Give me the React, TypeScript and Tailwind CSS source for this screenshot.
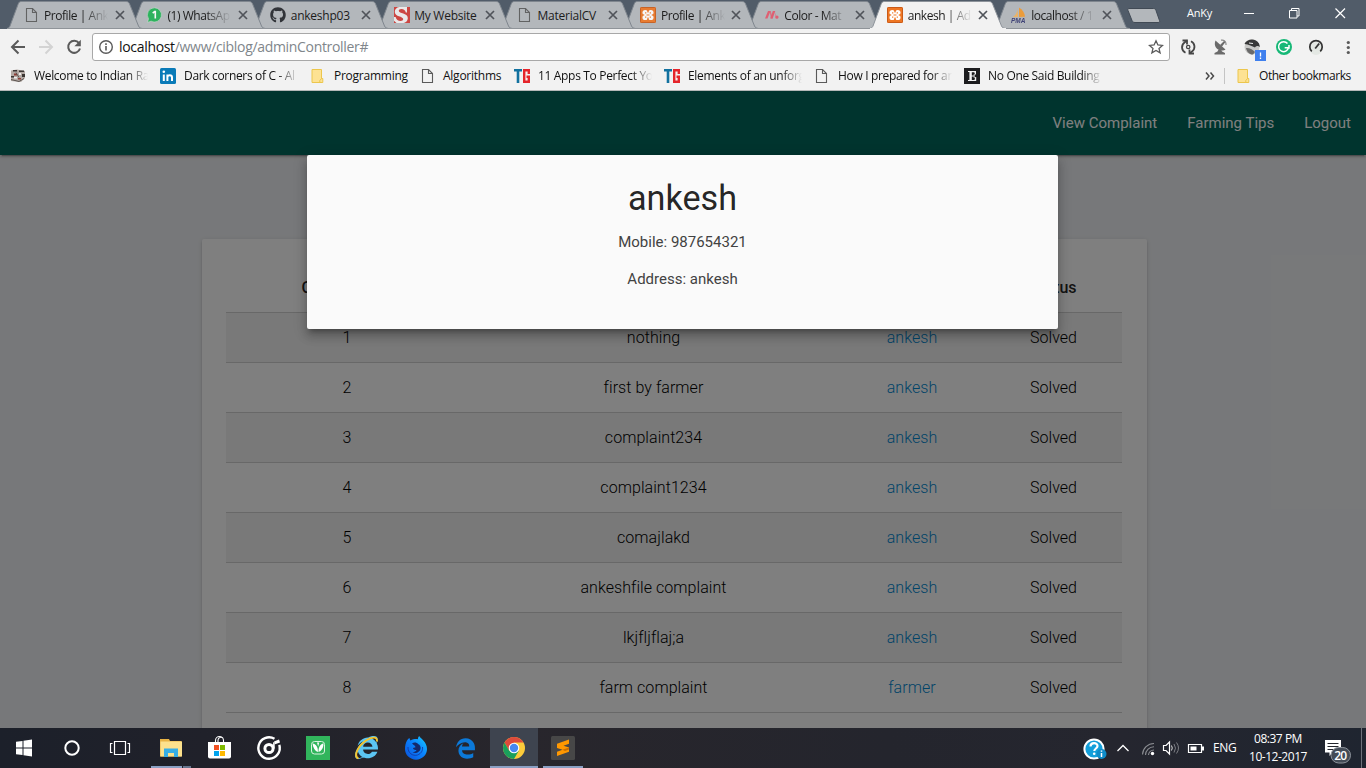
import React from "react";
import { FaGithub, FaEdgeLegacy, FaInternetExplorer } from "react-icons/fa";

type IconName = "file" | "whatsapp" | "github" | "s" | "xampp" | "material" | "pma";

const FileIcon = () => (
  <svg className="block" width="16" height="16" viewBox="0 0 16 16" fill="none" stroke="#5a5a5a" strokeWidth="1.1">
    <path d="M2.500 1.500h6l4 4v9h-10z" />
    <path d="M8.500 1.500v4h4" />
  </svg>
);

const XamppIcon = () => (
  <svg className="block" width="16" height="16" viewBox="0 0 16 16">
    <rect width="16" height="16" rx="1.5" fill="#ee7623" />
    <rect x=".5" y=".5" width="15" height="15" rx="1" fill="none" stroke="#c95a18" />
    <g fill="#fff">
      <circle cx="5.200" cy="5.600" r="2.700" />
      <circle cx="10.800" cy="5.600" r="2.700" />
      <circle cx="5.200" cy="10.400" r="2.700" />
      <circle cx="10.800" cy="10.400" r="2.700" />
      <path d="M4.500 5h7v6h-7z" />
    </g>
    <path d="M5.700 5.200v1.300M10.300 5.200v1.300M5.700 9.500v1.300M10.300 9.500v1.300M8 3v2.500M8 10.500V13M2.300 8h2M11.700 8h2M6.500 8h3" stroke="#ee7623" strokeWidth="1.200" />
  </svg>
);

const TabIcon = ({ name }: { name: IconName }) => {
  if (name === "file") return <FileIcon />;
  if (name === "xampp") return <XamppIcon />;
  if (name === "github") return <FaGithub size={16} color="#24262b" />;
  if (name === "whatsapp")
    return (
      <svg className="block" width="16" height="16" viewBox="0 0 16 16">
        <path d="M7.500.8a7.100 7.100 0 1 1-3.400 13.400L.5 15.400 1.500 11.800A7.100 7.100 0 0 1 7.500.8z" fill="#1fb254" stroke="#d6ded9" strokeWidth=".6" />
        <path d="M5.700 6.100 7.600 4.600h.7v6.800" fill="none" stroke="#fff" strokeWidth="1.600" />
      </svg>
    );
  if (name === "s")
    return (
      <svg className="block" width="16" height="16" viewBox="0 0 16 16">
        <rect width="16" height="16" fill="#cf3a36" />
        <path
          d="M13 0v5.600h-1.200C11.300 3.400 9.800 2 7.400 2 5.700 2 4.800 2.700 4.800 3.800c0 3 9 2 9 7.100 0 3-2.300 5.100-5.500 5.100H2.500L0 13.800V10h1.600c.7 2.600 2.500 4.100 4.900 4.100 1.700 0 2.700-.8 2.700-2C9.200 8.900.8 9.900.8 4.900.8 2.300 2.500.5 5.300 0z"
          fill="#f0eeee"
        />
      </svg>
    );
  if (name === "material")
    return (
      <svg className="block" width="16" height="16" viewBox="0 0 16 16" fill="#e4566b">
        <path d="M4 4h2.500L3.500 11.500H1z" />
        <path d="M8.800 4h2.500L8.700 11.500H6.200z" />
        <path d="M5.500 4h1.200l2 7.500H7z" opacity=".8" />
        <path d="M11 5.500l2.500 6h-2z" opacity=".6" />
        <circle cx="13" cy="10.100" r="1.600" />
      </svg>
    );
  return (
    <svg className="block" width="18" height="17" viewBox="0 0 18 17">
      <path d="M6.500 1.500C6.700 5 4.500 8.500 1.500 10.300l5.500-.6z" fill="#f4b35a" />
      <path d="M8 .5c3.500 2 5.800 5.500 6 9.200l-6 .2z" fill="#f29a2e" />
      <path d="M1 10.800h15l1-1" stroke="#b9b6b0" fill="none" />
      <text x="0" y="16" fontSize="6.500" fontWeight="700" fontStyle="italic" fontFamily="Liberation Sans, sans-serif" fill="#33366f">
        PMA
      </text>
    </svg>
  );
};

const tabs: { icon: IconName; title: string; fade?: boolean; active?: boolean; z: string }[] = [
  { icon: "file", title: "Profile | Ank", fade: true, z: "z-[9]" },
  { icon: "whatsapp", title: "(1) WhatsAp", fade: true, z: "z-[8]" },
  { icon: "github", title: "ankeshp03", z: "z-[7]" },
  { icon: "s", title: "My Website", z: "z-[6]" },
  { icon: "file", title: "MaterialCV", z: "z-[5]" },
  { icon: "xampp", title: "Profile | Ank", fade: true, z: "z-[4]" },
  { icon: "material", title: "Color - Mat", fade: true, z: "z-[3]" },
  { icon: "xampp", title: "ankesh | Ad", fade: true, active: true, z: "z-[10]" },
  { icon: "pma", title: "localhost / 1", fade: true, z: "z-[2]" },
];

const CloseX = () => (
  <svg className="block" width="10" height="10" viewBox="0 0 10 10" stroke="#50545a" strokeWidth="1.700">
    <path d="M1 1l8 8M9 1l-8 8" />
  </svg>
);

const Tab = ({ tab }: { tab: (typeof tabs)[number] }) => (
  <div className={`relative -mr-[12px] h-[29px] w-[135.400px] shrink-0 ${tab.z}`}>
    <svg className="absolute inset-0" width="136" height="29" viewBox="0 0 136 29">
      <path
        d="M0 28.500C2 28 2.500 27 3 26L11 4.500C11.800 2.300 12.500 1.500 14.500 1.500H119C121 1.500 122 2.300 122.800 4.500L131.500 26C132.200 27.500 133 28.200 135.500 28.500"
        fill={tab.active ? "#f2f2f2" : "#b3b7bb"}
        stroke={tab.active ? "#8d939a" : "#7f868e"}
      />
      {tab.active ? <path d="M0 28.500h136" stroke="#f2f2f2" /> : <path d="M0 28.500h136" stroke="#8f9499" />}
    </svg>
    <div className="relative flex h-full items-center pt-[1px] pl-[17px]">
      <div className={`w-[16px] shrink-0 ${tab.active ? "" : "opacity-90"}`}>
        <TabIcon name={tab.icon} />
      </div>
      <div
        className={`ml-[4.500px] w-[64px] text-[12px] leading-[17px] whitespace-nowrap text-[#1c1c1c] ${
          tab.fade ? "tracking-[-0.450px] [mask-image:linear-gradient(to_right,#000_60%,transparent)]" : "tracking-[-0.250px]"
        }`}
      >
        {tab.title}
      </div>
      <div className="ml-[6.500px]">
        <CloseX />
      </div>
    </div>
  </div>
);

const TabStrip = () => (
  <div className="flex h-[29px] bg-[#515c69] pl-[6.500px]">
    {tabs.map((t, i) => (
      <Tab key={i} tab={t} />
    ))}
    <svg className="relative ml-[9px] shrink-0" width="36" height="29" viewBox="0 0 36 29">
      <path d="M3 8.500h24.500c1.500 0 2 .8 2.500 2l3.500 10c.5 1.500 0 2-1.500 2H9c-1.500 0-2.500-.6-3-2l-4-10c-.5-1.300 0-2 1-2z" fill="#b3b7bb" stroke="#414a55" />
    </svg>
    <div className="ml-auto flex h-[27px] items-center text-white">
      <span className="w-[46px] text-[11px] tracking-[-0.250px]">AnKy</span>
      <svg className="mr-[2px] shrink-0" width="131" height="27" viewBox="0 0 131 27" fill="none" stroke="#fff">
        <path d="M11 13.500h10" />
        <path d="M56.500 10.500h7.500v7.500h-7.500zM58.500 10.500v-2h7.500v7.500h-2" />
        <path d="M102.500 8.500l9.500 9.500M112 8.500l-9.500 9.500" strokeWidth="1.200" />
      </svg>
    </div>
  </div>
);

const Toolbar = () => (
  <div className="flex h-[35px] items-center bg-[#f2f2f2]">
    <svg className="shrink-0" width="92" height="35" viewBox="0 0 92 35" fill="none" strokeWidth="2">
      <path d="M25 18H12.500M18.500 11.500L12 18l6.500 6.500" stroke="#5a5a5a" />
      <path d="M39 18h12.500M45.500 11.500L52 18l-6.500 6.500" stroke="#d3d3d3" />
      <path d="M79 14.200A6 6 0 1 0 80 19.500" stroke="#5a5a5a" />
      <path d="M80.800 10.800v6.400h-6.400z" fill="#5a5a5a" />
    </svg>
    <div className="flex h-[28px] w-[1078px] shrink-0 items-center rounded-[3px] border border-[#a8a8a8] bg-white pt-px">
      <svg className="ml-[5px]" width="16" height="16" viewBox="0 0 16 16" fill="none" stroke="#5a5a5a">
        <circle cx="8" cy="8" r="6.300" strokeWidth="1.400" />
        <path d="M8 7v4.500M8 4.300v1.600" strokeWidth="1.600" />
      </svg>
      <span className="ml-[5px] text-[14px] leading-[20px] tracking-[-0.320px] text-[#111]">
        localhost<span className="text-[#80868b]">/www/ciblog/adminController#</span>
      </span>
      <svg className="mr-[5px] ml-auto" width="16" height="16" viewBox="0 0 16 16" fill="none" stroke="#5a5a5a" strokeWidth="1.300">
        <path d="M8 1.800l1.900 4.200 4.600.4-3.500 3 1.100 4.500L8 11.500l-4.100 2.400L5 9.400l-3.500-3 4.600-.4z" />
      </svg>
    </div>
    <svg className="shrink-0" width="196" height="35" viewBox="0 0 196 35">
      <g fill="none" stroke="#474747" strokeWidth="1.800">
        <path d="M15.500 23.800A6 6 0 0 1 14.500 13.500l2.500-2M21 12.200A6 6 0 0 1 22 22.500l-2.500 2" />
        <path d="M12.500 11.500h4.500v4M24 24.500h-4.500v-4" />
        <circle cx="18.200" cy="18" r="1.700" strokeWidth="1.300" />
      </g>
      <g fill="#6b6b6b">
        <path d="M45.500 11.500c-2 4.500.5 9.500 5.500 10 2 .2 3.500-.3 4.500-1z" />
        <path d="M44.500 25.500h10.500v-1.500l-3-1.500-1-2h-2.500l-1 2-3 1.500zM50 16l4.500-4.500 1.200 1.200L52 17.500z" />
        <path d="M51 11.200c3-.6 5.500 1.500 5 4.800" stroke="#8b8b8b" fill="none" strokeWidth="1.200" />
      </g>
      <circle cx="82" cy="18" r="7.500" fill="#c9c9c7" />
      <path d="M74.500 15c2-5 11-6.500 14.500-.5l1 3.500c-2-1.500-4-1-5 .5-3-1.500-6-3-10.500-3.500z" fill="#383838" />
      <path d="M76 19c3-.5 6 1 9 4l-2 2.500c-3 .5-6-2-7-6.500z" fill="#6a6a6a" />
      <path d="M79 14l4 .5" stroke="#eee" />
      <rect x="85" y="21" width="11" height="11" fill="#3f80ee" />
      <path d="M90.500 23.500v4M90.500 28.500v1.500" stroke="#fff" strokeWidth="1.300" />
      <circle cx="114" cy="18" r="8" fill="#17b877" />
      <path d="M117.500 14.500a5 5 0 1 0 1 4.200h-3.800M119 16v3h-1" fill="none" stroke="#fff" strokeWidth="1.500" />
      <circle cx="146" cy="19.500" r="6.500" fill="#e4e8e4" />
      <path d="M141.800 22.300A6.200 6.200 0 1 1 150.200 22.300" fill="none" stroke="#333" strokeWidth="1.700" />
      <path d="M145.200 19.500l4-5" stroke="#333" strokeWidth="1.800" />
      <g fill="#5a5a5a">
        <circle cx="178.300" cy="13.500" r="1.600" />
        <circle cx="178.300" cy="18.500" r="1.600" />
        <circle cx="178.300" cy="23.500" r="1.600" />
      </g>
    </svg>
  </div>
);

const Folder = () => (
  <svg className="block" width="16" height="16" viewBox="0 0 16 16">
    <path d="M2 1.500h9.500v13H2z" fill="#fde293" stroke="#ecc64c" />
    <path d="M11.500 10.500h1.300v4h-3v-2z" fill="#fde293" stroke="#ecc64c" />
  </svg>
);

const TG = () => (
  <svg className="block" width="17" height="16" viewBox="0 0 17 16" fill="none">
    <path d="M0 2.200h8M4 2v13" stroke="#11719f" strokeWidth="2.600" />
    <path d="M14.800 6V2.200h-4.600v11.600h4.600V8.800h-2.300" stroke="#e5252b" strokeWidth="2.400" />
  </svg>
);

const LinkedIn = () => (
  <svg className="block" width="16" height="16" viewBox="0 0 16 16">
    <rect width="16" height="16" rx="1.500" fill="#0a7bb8" />
    <path d="M3.800 6.500V13M7.400 13V6.500M7.400 9c.2-2 4.600-2.600 4.600.6V13" fill="none" stroke="#fff" strokeWidth="2" />
    <circle cx="3.800" cy="3.800" r="1.300" fill="#fff" />
  </svg>
);

const Train = () => (
  <svg className="block" width="16" height="16" viewBox="0 0 16 16">
    <path d="M1 2.500l6-1 8 1.500v7l-4 4-10-1z" fill="#b3a9a4" />
    <path d="M3 2h4v1.500H3zM9 2.500h5v1.500H9zM1 8h3v1.500H1zM12 6h3v3h-3z" fill="#3b3533" />
    <path d="M4 5.500h3v2H4zM8 10h3v1.500H8z" fill="#8b3d35" />
    <path d="M1 11.500l8 2 5-3M6 4.500l3 5" stroke="#5b5450" fill="none" />
    <path d="M4 9h3v1.500H4zM9 5h2v2H9z" fill="#eee" />
  </svg>
);

const EIcon = () => (
  <svg className="block" width="16" height="16" viewBox="0 0 16 16">
    <rect width="16" height="16" fill="#1d1d1f" />
    <path d="M4 3h8v3.500h-1L10.300 4.200H7.800v3.200h2V6h.8v4h-.8V8.600h-2v3.300h2.700L11.200 9h1v4H4v-1h1.400V4.100H4z" fill="#f4f4f4" />
  </svg>
);

const bookmarks: { icon: React.ReactNode; title: string; cell: string; text: string; fade?: boolean }[] = [
  { icon: <Train />, title: "Welcome to Indian Ra", cell: "w-[150px]", text: "ml-[8px] w-[114px]", fade: true },
  { icon: <LinkedIn />, title: "Dark corners of C - Al", cell: "w-[150px]", text: "ml-[8px] w-[114px]", fade: true },
  { icon: <Folder />, title: "Programming", cell: "w-[110px]", text: "ml-[8px] w-[80px]" },
  { icon: <FileIcon />, title: "Algorithms", cell: "w-[94px]", text: "ml-[7px] w-[66px]" },
  { icon: <TG />, title: "11 Apps To Perfect Yo", cell: "w-[150px]", text: "ml-[8px] w-[114px]", fade: true },
  { icon: <TG />, title: "Elements of an unforg", cell: "w-[150px]", text: "ml-[8px] w-[114px]", fade: true },
  { icon: <FileIcon />, title: "How I prepared for an", cell: "w-[150px]", text: "ml-[8px] w-[114px]", fade: true },
  { icon: <EIcon />, title: "No One Said Building", cell: "w-[150px]", text: "ml-[8px] w-[114px]", fade: true },
];

const BookmarksBar = () => (
  <div className="flex h-[27px] items-center border-b border-[#b4b8b8] bg-[#f2f2f2] pb-[3px] pl-[10px] text-[12px] text-[#111]">
    {bookmarks.map((b, i) => (
      <div key={i} className={`flex shrink-0 items-center ${b.cell}`}>
        <div className="w-[16px] shrink-0">{b.icon}</div>
        <span
          className={`leading-[18px] whitespace-nowrap ${b.text} ${
            b.fade ? "tracking-[-0.330px] [mask-image:linear-gradient(to_right,#000_82%,transparent)]" : "tracking-[-0.250px]"
          }`}
        >
          {b.title}
        </span>
      </div>
    ))}
    <svg className="ml-[91px] shrink-0" width="11" height="10" viewBox="0 0 11 10" fill="none" stroke="#4a4a4a" strokeWidth="1.500">
      <path d="M1 1.500L4 5 1 8.500M5.500 1.500l3 3.500-3 3.500" />
    </svg>
    <div className="ml-[8px] h-[16px] w-px bg-[#c4c4c4]" />
    <div className="ml-[11px]">
      <Folder />
    </div>
    <span className="ml-[7px] leading-[18px] tracking-[-0.450px] whitespace-nowrap">Other bookmarks</span>
  </div>
);

const complaints: [number, string, string][] = [
  [1, "nothing", "ankesh"],
  [2, "first by farmer", "ankesh"],
  [3, "complaint234", "ankesh"],
  [4, "complaint1234", "ankesh"],
  [5, "comajlakd", "ankesh"],
  [6, "ankeshfile complaint", "ankesh"],
  [7, "lkjfljflaj;a", "ankesh"],
  [8, "farm complaint", "farmer"],
];

const ComplaintsPage = () => (
  <div className="relative h-[637px] overflow-hidden bg-[#eff1f4] font-['Roboto',sans-serif] text-black/87">
    <nav className="relative flex h-[64px] items-center justify-end gap-[30px] bg-[#00695c] pr-[15px] text-[15px] text-white shadow-[0_2px_2px_0_rgba(0,0,0,0.140),0_1px_5px_0_rgba(0,0,0,0.120),0_3px_1px_-2px_rgba(0,0,0,0.200)]">
      <a>View Complaint</a>
      <a>Farming Tips</a>
      <a>Logout</a>
    </nav>
    <main className="mt-[84px] ml-[202px] h-[520px] w-[945px] rounded-[2px] bg-white px-[24px] pt-[24px] shadow-[0_2px_2px_0_rgba(0,0,0,0.140),0_1px_5px_0_rgba(0,0,0,0.120),0_3px_1px_-2px_rgba(0,0,0,0.200)]">
      <div className="grid h-[50px] w-[896px] grid-cols-[242px_371px_146px_137px] items-center border-b border-[#d0d0d0] text-center text-[16px] leading-[22px] font-medium">
        <span>Complaint Id</span>
        <span />
        <span />
        <span>Status</span>
      </div>
      {complaints.map(([id, text, farmer]) => (
        <div
          key={id}
          className="grid h-[50px] w-[896px] grid-cols-[242px_371px_146px_137px] items-center border-b border-[#d0d0d0] text-center text-[16px] leading-[22px] font-light tracking-[0.060px] text-black even:bg-[#f2f2f2]"
        >
          <span>{id}</span>
          <span>{text}</span>
          <span className="text-[#0288d1]">{farmer}</span>
          <span>Solved</span>
        </div>
      ))}
    </main>
    <div className="absolute inset-0 bg-black/50" />
    <section className="absolute top-[64px] left-[307px] h-[174px] w-[751px] rounded-[2px] bg-[#fafafa] pt-[23px] text-center shadow-[0_8px_10px_1px_rgba(0,0,0,0.140),0_3px_14px_2px_rgba(0,0,0,0.120),0_5px_5px_-3px_rgba(0,0,0,0.300)]">
      <h4 className="text-[34.200px] leading-[40px]">ankesh</h4>
      <p className="mt-[13px] text-[15px] leading-[22px] text-[#424242]">Mobile: 987654321</p>
      <p className="mt-[15px] text-[15px] leading-[22px] text-[#424242]">Address: ankesh</p>
    </section>
  </div>
);

const LeftTaskIcons = () => (
  <svg width="342" height="40" viewBox="0 0 342 40">
    <path d="M16 13.800l6.500-.9v6.600H16zM23.500 12.700l8.500-1.200v8H23.500zM16 20.500h6.500v6.600l-6.500-.9zM23.500 20.500H32v8l-8.500-1.200z" fill="#fff" />
    <circle cx="72" cy="20" r="6.700" fill="none" stroke="#fff" strokeWidth="2" />
    <g fill="none" stroke="#fff" strokeWidth="1.200">
      <path d="M114.500 13.500h11v13h-11zM112.500 15.500h-2v9h2M127.500 15.500h2v9h-2" />
    </g>
    <path d="M151 38h31v2h-31z" fill="#8aa0c4" />
    <path d="M183 38h8v2h-8z" fill="#66758e" />
    <path d="M160 11h9l1 2h11.500v15.500H160z" fill="#e9b445" />
    <path d="M160.500 13.500H182v15h-21.500z" fill="#fce18d" />
    <path d="M164 29v-8.500h14V29h-4v-4h-6v4z" fill="#37aee5" />
    <path d="M215.500 15v-2.500a4 4 0 0 1 8 0V15M218 14v-2a3 3 0 0 1 5-2" fill="none" stroke="#fff" strokeWidth="1.100" />
    <path d="M208 14h23v14.500a2 2 0 0 1-2 2h-19a2 2 0 0 1-2-2z" fill="#fff" />
    <path d="M214 17h5v5h-5z" fill="#f25022" />
    <path d="M220 17h5v5h-5z" fill="#7fba00" />
    <path d="M214 23h5v5h-5z" fill="#00a4ef" />
    <path d="M220 23h5v5h-5z" fill="#ffb900" />
    <g fill="none" stroke="#fff">
      <path d="M274.500 10.800A10.700 10.700 0 1 0 279.300 16.900" strokeWidth="2.400" />
      <circle cx="269" cy="20.500" r="4.100" strokeWidth="3" />
      <path d="M273.900 20.500v-6.300" strokeWidth="1.600" />
      <path d="M274.500 14.800L279.500 13" strokeWidth="3" />
    </g>
    <rect x="306" y="8" width="24" height="24" fill="#31b55c" />
    <rect x="311.500" y="13.500" width="13" height="12.500" rx="3" fill="none" stroke="#d9f2df" strokeWidth="1" />
    <path d="M312.500 15.500c4 .5 5.500 4 5.500 8.500-3-1-5-4-5.500-8.500zM323.500 15.500c-3.500.5-5 4-5 8.500 3-1 5-4 5-8.500z" fill="#fff" />
    <path d="M317 14.500h2.200l-1 4z" fill="#fff" />
  </svg>
);

const IEIcon = () => (
  <span className="relative block h-[24px] w-[24px]">
    <FaInternetExplorer size={23} color="#5cc5f2" />
    <svg className="absolute inset-0" width="24" height="24" viewBox="0 0 24 24" fill="none">
      <path d="M3.500 22.500C-2 20 3 10 11 4.500 16.500.8 23 .2 21.800 5.500" stroke="#f5c32b" strokeWidth="1.900" />
    </svg>
  </span>
);

const FirefoxIcon = () => (
  <svg className="block" width="24" height="24" viewBox="0 0 24 24">
    <defs>
      <linearGradient id="ff" x1="1" y1="0" x2="0" y2="1">
        <stop offset="0" stopColor="#18d2ff" />
        <stop offset=".45" stopColor="#0a84ff" />
        <stop offset="1" stopColor="#0a4fd8" />
      </linearGradient>
    </defs>
    <path d="M3 4.500C4 3 5 2 5.500 2c0 1 .3 1.800 1 2.500C9 3 12 2.800 14 3.200c-.2-1.200.3-2.200 1.200-3.200C17 3 23 6 23 13a11 10.700 0 0 1-22 0C1 9.500 1.800 6.500 3 4.500z" fill="url(#ff)" />
    <path d="M8 7.500c2-1.500 5-1 6 .5 2 .5 3 3 2.500 5-1 3.500-5 5-8 3 2 0 3.500-.5 4-2-2 0-3.500-.5-3.500-2l2.500-.7c0-1.300-1.500-2-3.500-3.800z" fill="#14296c" />
    <path d="M4 11c-.5 6 5 9.500 9.500 8 4-1.500 5.500-5 5-8" fill="none" stroke="#123fae" strokeWidth="1" />
  </svg>
);

const ChromeIcon = () => (
  <svg className="block" width="22" height="22" viewBox="0 0 22 22">
    <circle cx="11" cy="11" r="11" fill="#fccb3a" />
    <path d="M1.500 5.500A11 11 0 0 1 20.500 5.500H11L6.200 13.800z" fill="#de4b3b" />
    <path d="M1.500 5.500A11 11 0 0 0 11 22l4.800-8.300H6.200z" fill="#1a9f5c" />
    <circle cx="11" cy="11" r="5.300" fill="#fff" />
    <circle cx="11" cy="11" r="4.200" fill="#4788f0" />
  </svg>
);

const Taskbar = () => (
  <footer className="flex h-[40px] bg-[linear-gradient(90deg,#1c202a_0%,#20212a_15%,#28262c_38%,#24252d_65%,#25262f_82%,#1f2530_100%)] text-white">
    <LeftTaskIcons />
    <div className="flex w-[48px] items-center justify-center pl-[1px]">
      <IEIcon />
    </div>
    <div className="flex w-[50px] items-center justify-center pl-[2px]">
      <FirefoxIcon />
    </div>
    <div className="flex w-[50px] items-center justify-center">
      <FaEdgeLegacy size={21} color="#0c79d8" />
    </div>
    <div className="flex w-[48px] items-center justify-center border-b-2 border-[#8aa0c4] bg-[#3e444f] pt-[2px]">
      <ChromeIcon />
    </div>
    <div className="ml-[5px] flex w-[40px] items-center justify-center border-b-2 border-[#8aa0c4] pt-[2px]">
      <svg width="24" height="24" viewBox="0 0 24 24">
        <rect width="24" height="24" rx="1.500" fill="#474747" />
        <path d="M18 3.500v4.200l-5.500 2 5.500 1.800v4.300L6 20v-4.200l5.500-2L6 12V7.700z" fill="#ff9800" />
        <path d="M11.500 13.800l6.500-2.300v2L14 15z" fill="#c96e00" />
      </svg>
    </div>
    <div className="ml-auto flex items-center">
      <svg width="125" height="40" viewBox="0 0 125 40">
        <circle cx="11" cy="21" r="9.600" fill="#139fda" stroke="#fff" strokeWidth="2" />
        <path d="M7.500 18.500c0-4.500 7-4.500 7-.5 0 2.500-3.200 2.500-3.200 5" fill="none" stroke="#fff" strokeWidth="2.200" />
        <circle cx="11.200" cy="25.800" r="1.300" fill="#fff" />
        <circle cx="18.500" cy="26" r="5" fill="#0f8cc8" />
        <path d="M18.500 25v4M18.500 22.500v1.300" stroke="#fff" strokeWidth="1.500" />
        <path d="M34.500 23l5.500-5.500 5.500 5.500" fill="none" stroke="#fff" strokeWidth="1.300" />
        <g fill="none" stroke="#8c8e93" strokeWidth="1.100">
          <path d="M59.500 26.500A11.500 11.500 0 0 1 71 15.500M62.500 27a8.500 8.500 0 0 1 8.500-8.200M65.500 27a5.500 5.500 0 0 1 5.500-5" />
        </g>
        <circle cx="69.500" cy="25.500" r="1.700" fill="#fff" />
        <path d="M80.500 17.500h2.500l3.500-3.500v12l-3.500-3.500h-2.500z" fill="none" stroke="#fff" strokeWidth="1.200" />
        <path d="M88.500 17.500q1.500 2.500 0 5" fill="none" stroke="#ddd" />
        <path d="M91 16q3 4 0 8.500M93.500 14.500q4 5.500 0 11" fill="none" stroke="#7c7e84" />
        <path d="M105.500 16.500h13v8h-13z" fill="none" stroke="#fff" strokeWidth="1.200" />
        <path d="M107.500 18.500h6v4h-6zM119 18.500h2v4h-2z" fill="#fff" />
      </svg>
      <span className="w-[37px] pl-[5px] text-[12px] tracking-[-0.400px]">ENG</span>
      <div className="w-[66px] text-center text-[12px] leading-[18px] tracking-[-0.480px]">
        <div>08:37 PM</div>
        <div>10-12-2017</div>
      </div>
      <svg className="ml-[13px]" width="42" height="40" viewBox="0 0 42 40">
        <path d="M1 12h16v12.500H8.500l-3 3.500v-3.500H1z" fill="#fff" />
        <path d="M3.500 15.500h11M3.500 18.500h11M3.500 21.500h6" stroke="#24262d" />
        <rect x="7" y="19.500" width="19.500" height="15.500" rx="7.700" fill="#444c57" stroke="#8d939b" />
        <text x="16.700" y="31.500" textAnchor="middle" fontSize="12" fontWeight="600" fontFamily="Open Sans, sans-serif" fill="#fff" textLength="13">
          20
        </text>
        <path d="M37.500 0v40" stroke="#6d727b" />
      </svg>
    </div>
  </footer>
);

export default function App() {
  return (
    <div className="flex h-[768px] w-[1366px] flex-col overflow-hidden font-['Open_Sans',sans-serif]">
      <header>
        <TabStrip />
        <Toolbar />
        <BookmarksBar />
      </header>
      <ComplaintsPage />
      <Taskbar />
    </div>
  );
}
